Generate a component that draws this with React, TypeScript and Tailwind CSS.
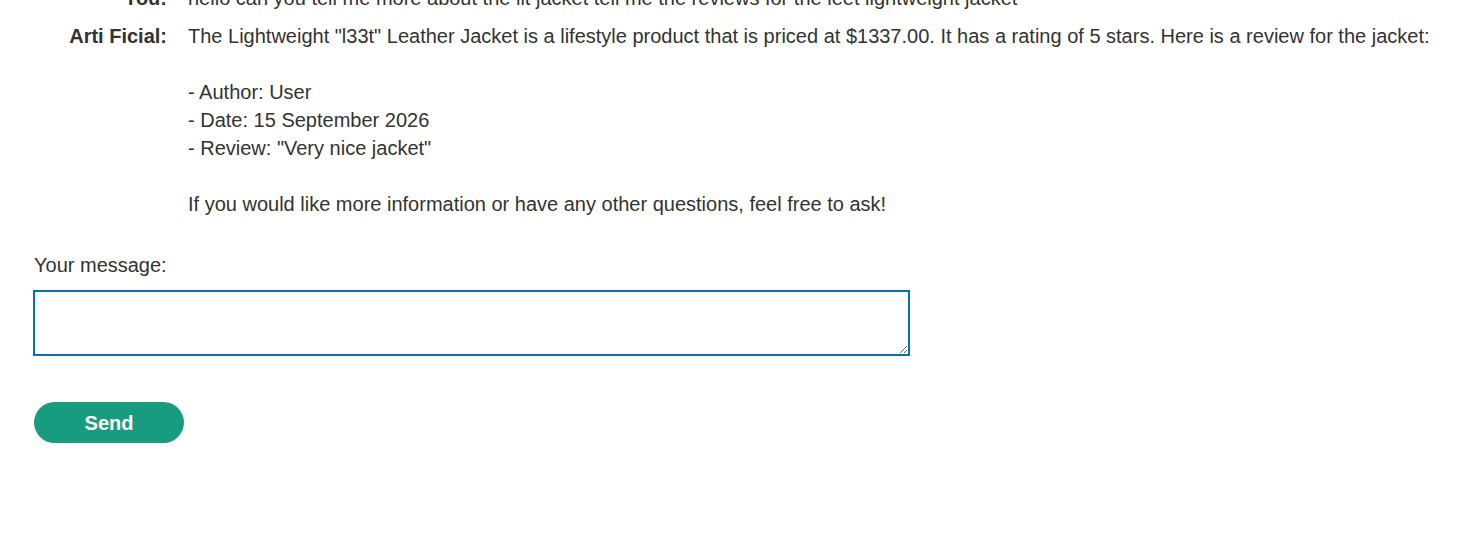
const messages = [
  {
    who: 'You:',
    text: 'hello can you tell me more about the lit jacket tell me the reviews for the leet lightweight jacket',
  },
  {
    who: 'Arti Ficial:',
    text: 'The Lightweight "l33t" Leather Jacket is a lifestyle product that is priced at $1337.00. It has a rating of 5 stars. Here is a review for the jacket:\n\n- Author: User\n- Date: 15 September 2026\n- Review: "Very nice jacket"\n\nIf you would like more information or have any other questions, feel free to ask!',
  },
]

export default function App() {
  return (
    <div className="min-h-screen bg-white text-[#333332] text-[20px] leading-[28px] font-['Liberation_Sans',Arial,sans-serif]">
      <div className="-mt-[26px] px-[34px]">
        <table className="border-separate border-spacing-y-[10px] -my-[10px]">
          <tbody>
            {messages.map((m) => (
              <tr key={m.who}>
                <th className="w-[154px] align-top text-right font-bold pr-[21px] whitespace-nowrap">{m.who}</th>
                <td className="whitespace-pre-wrap align-top">{m.text}</td>
              </tr>
            ))}
          </tbody>
        </table>

        <form className="mt-[33px]" onSubmit={(e) => e.preventDefault()}>
          <label className="block mb-[11px]">Your message:</label>
          <textarea className="block -ml-px w-[877px] h-[66px] border-2 border-[#0071bc] outline-none resize-y" />
          <button
            type="submit"
            className="mt-[46px] w-[150px] h-[41px] rounded-full bg-[#189c80] text-white font-bold"
          >
            Send
          </button>
        </form>
      </div>
    </div>
  )
}
